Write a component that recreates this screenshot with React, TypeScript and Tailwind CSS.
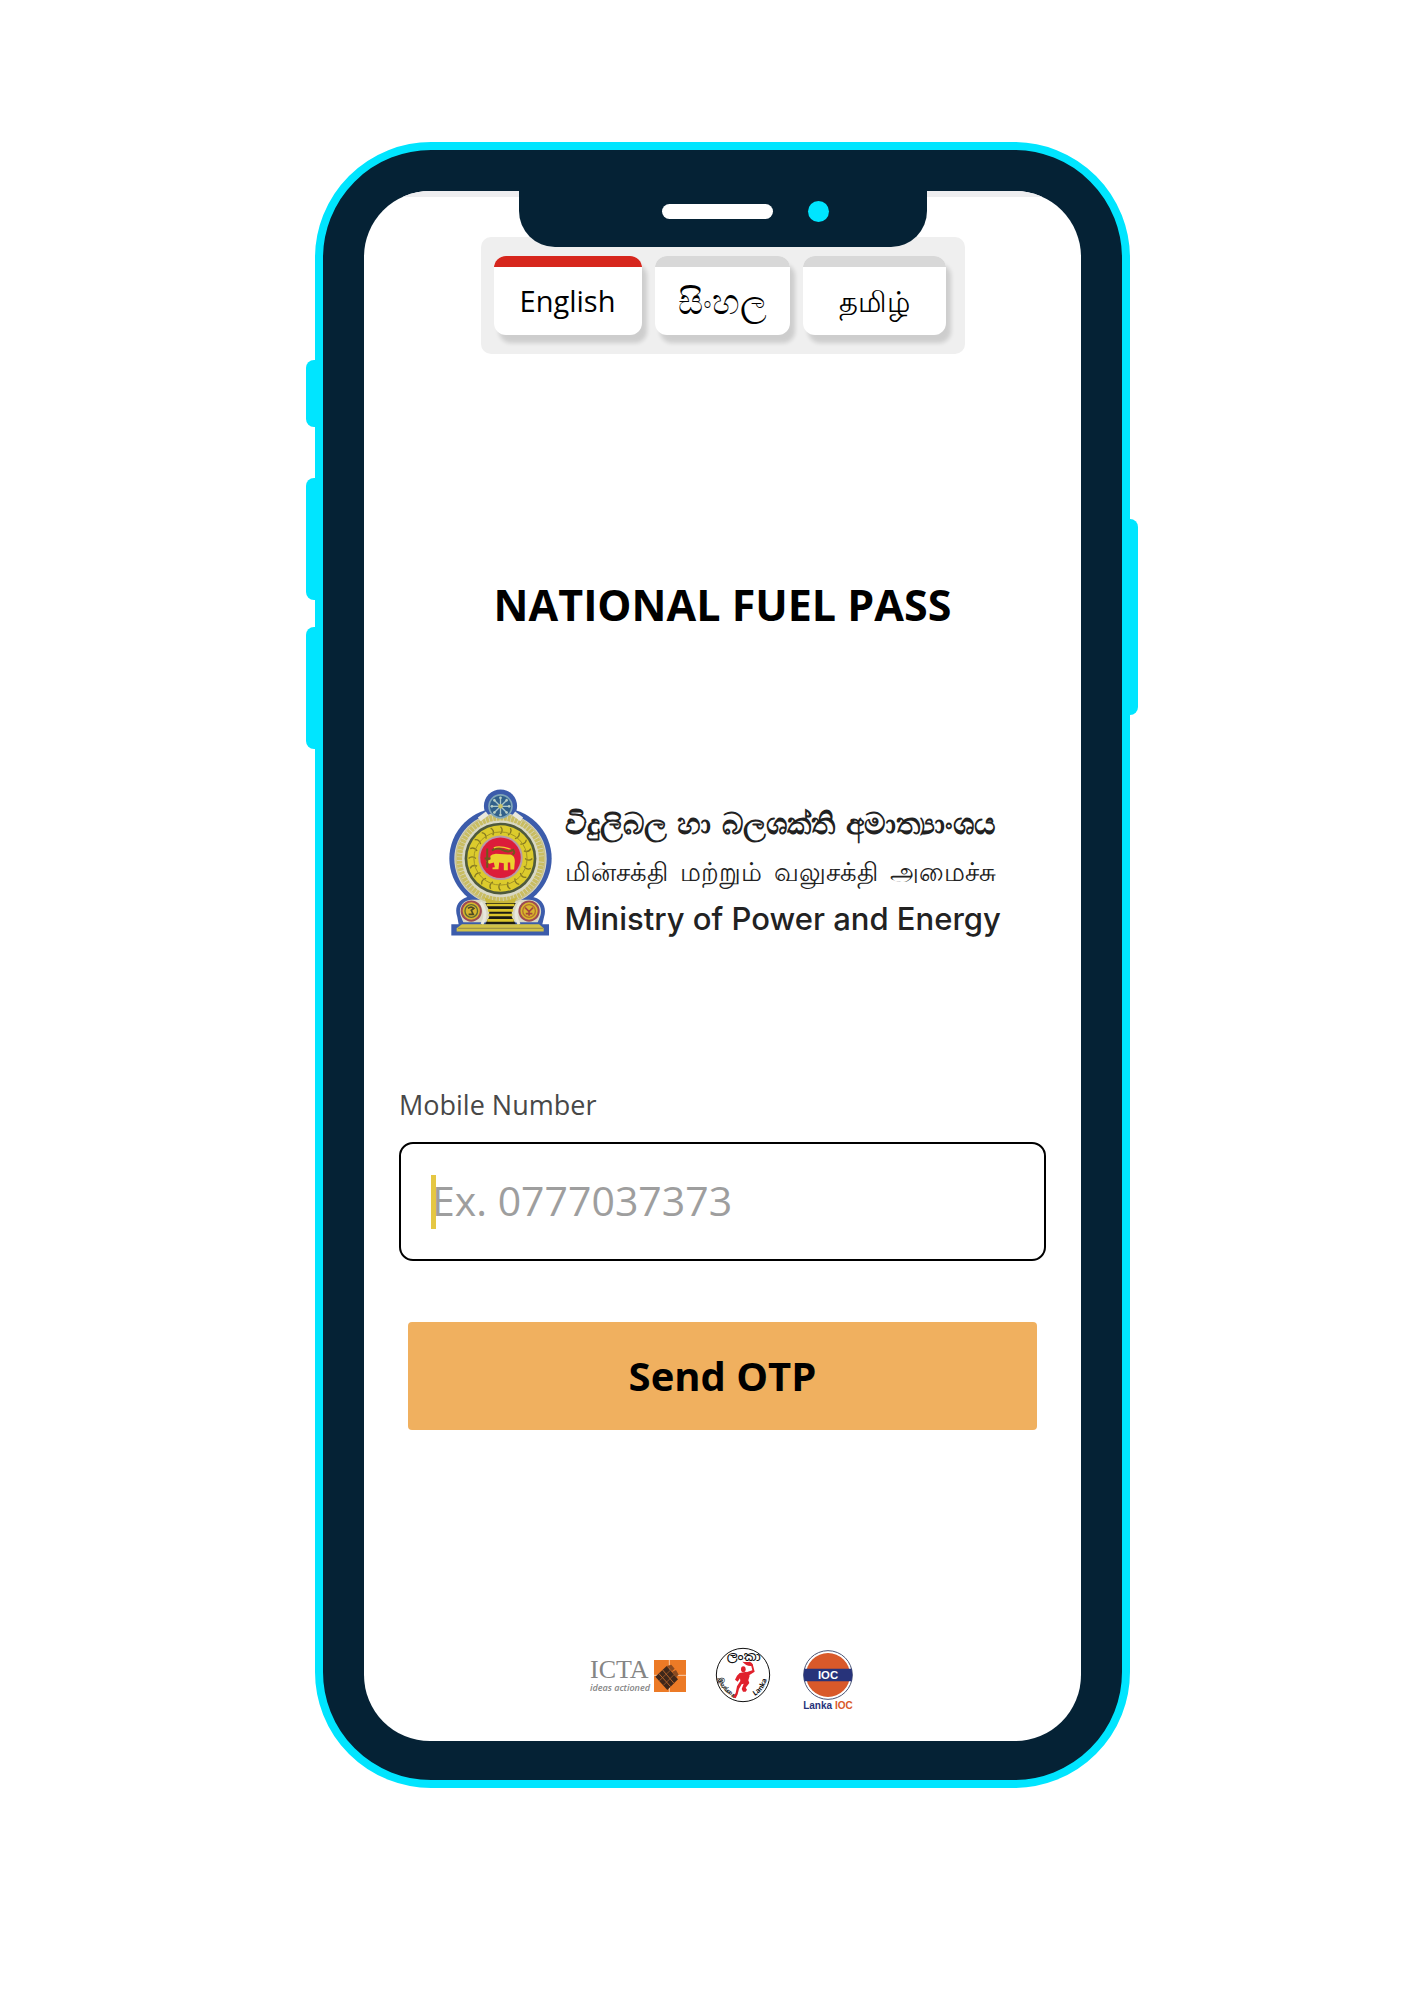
import React, { useState } from "react";

const spokes = [0, 45, 90, 135, 180, 225, 270, 315];
const petals = Array.from({ length: 20 }, (_, i) => i * 18);

function Emblem() {
  return (
    <svg
      viewBox="55 55 310 442"
      className="h-[147px] w-[103px] shrink-0"
      role="img"
      aria-label="Emblem of Sri Lanka"
    >
      <g fill="#3c5cab">
        <circle cx="210" cy="106" r="50" />
        <ellipse cx="210" cy="264" rx="154" ry="152" />
        <path d="M120 378C82 382 70 412 80 440L84 462H62V496H356V462H336L341 440C350 412 338 382 300 378Z" />
      </g>
      <g fill="#d9d8c4">
        <ellipse cx="210" cy="265" rx="139" ry="138" />
        <path d="M128 388C96 386 82 412 90 436L98 456H322L330 436C338 412 324 386 292 388Z" />
      </g>
      <ellipse cx="210" cy="265" rx="124" ry="124" fill="none" stroke="#c9bd62" strokeWidth="17" strokeDasharray="9 2" />
      <ellipse cx="210" cy="265" rx="134" ry="134" fill="none" stroke="#c9c187" strokeWidth="4" />
      <path d="M146 146L170 128M274 146L250 128" stroke="#e9e8dd" strokeWidth="14" />
      <circle cx="210" cy="264" r="108" fill="#4f5a3c" />
      <circle cx="210" cy="264" r="100" fill="#dccb2c" />
      {petals.map((a) => (
        <path
          key={a}
          d="M210 168Q220 178 210 190"
          transform={`rotate(${a} 210 264)`}
          stroke="#857a22"
          strokeWidth="4"
          fill="none"
        />
      ))}
      <circle cx="210" cy="264" r="80" fill="none" stroke="#a39424" strokeWidth="3" />
      <circle cx="210" cy="262" r="67" fill="#b79aa8" />
      <circle cx="210" cy="262" r="61" fill="#dc1c3a" />
      <path
        d="M186 252L196 250L232 252C246 250 254 258 253 274L251 297H240L239 276L232 276V299H220V278L206 276L204 296H186V291L193 290L190 276L176 280L166 272L178 268L180 256Z"
        fill="#ecd22e"
      />
      <path d="M184 240Q200 228 216 238T248 238Q256 248 246 252M170 234V292M162 264H180" stroke="#6f5a1c" strokeWidth="6" fill="none" />
      <path d="M190 232Q206 224 240 236" stroke="#ecd22e" strokeWidth="4" fill="none" />
      <circle cx="210" cy="107" r="37" fill="#7fa6b8" />
      <circle cx="210" cy="107" r="32" fill="#31608a" />
      {spokes.map((a) => (
        <g key={a} transform={`rotate(${a} 210 107)`}>
          <path d="M210 101V82" stroke="#a9c6c9" strokeWidth="4" />
          <circle cx="210" cy="81" r="4" fill="#b9cfc4" />
        </g>
      ))}
      <circle cx="210" cy="107" r="7" fill="#c9c46a" />
      <path d="M160 380Q210 404 260 380L252 398H168Z" fill="#c9b83a" />
      <path d="M164 398H256L244 420V440L256 462H164L176 440V420Z" fill="#1d1c14" />
      <path d="M168 404H252M172 420H248M174 434H246M170 450H250" stroke="#dcc62c" strokeWidth="8" />
      <path d="M150 396C166 420 166 444 154 462M270 396C254 420 254 444 266 462" stroke="#e8e7de" strokeWidth="9" fill="none" />
      <circle cx="122" cy="422" r="32" fill="#9e4a52" />
      <circle cx="122" cy="422" r="26" fill="#d8b52e" />
      <circle cx="122" cy="422" r="19" fill="none" stroke="#5d6a35" strokeWidth="4" />
      <path d="M112 414Q122 406 130 414L122 420L128 432H114" stroke="#4e4a24" strokeWidth="5" fill="none" />
      <circle cx="296" cy="422" r="32" fill="#9e4a52" />
      <circle cx="296" cy="422" r="26" fill="#d8b52e" />
      <circle cx="296" cy="422" r="19" fill="none" stroke="#b5702e" strokeWidth="4" />
      <path d="M284 412L296 424L308 412M296 424V436M286 430H306" stroke="#a5483c" strokeWidth="5" fill="none" />
      <path d="M94 462H326L340 474V484H78V474Z" fill="#d2c247" />
      <path d="M82 474H338" stroke="#958a45" strokeWidth="3" />
    </svg>
  );
}

function IctaMark() {
  return (
    <svg viewBox="0 0 96 96" className="size-8 shrink-0" aria-hidden="true">
      <rect width="96" height="96" fill="#ec7a26" />
      <path d="M0 46H96M46 0V96" stroke="#f8cfae" strokeWidth="3" />
      <path d="M4 50L38 18L72 58L40 90Z" fill="#3f271a" />
      <path d="M38 18L52 14L62 26L54 34ZM54 36L66 30L74 44L66 52Z" fill="#8a4a20" />
      <path d="M14 40L50 80M26 30L60 70" stroke="#b5642c" strokeWidth="3" />
      <path d="M16 62L48 32M28 76L60 44" stroke="#b5642c" strokeWidth="2" />
    </svg>
  );
}

function CeypetcoMark() {
  return (
    <svg viewBox="0 0 168 168" className="size-14 shrink-0" role="img" aria-label="Ceypetco">
      <defs>
        <path id="arc-left" d="M12 84A72 72 0 0 0 66 154" />
        <path id="arc-right" d="M108 152A72 72 0 0 0 156 84" />
      </defs>
      <circle cx="84" cy="84" r="80" fill="#fff" stroke="#111" strokeWidth="3" />
      <g fill="#111" fontWeight="700" textAnchor="middle" fontFamily="'Noto Sans Sinhala','Noto Sans',sans-serif">
        <text x="86" y="42" fontSize="38" fontWeight="500">ලංකා</text>
        <text fontSize="19"><textPath href="#arc-left" startOffset="50%">இலங்கை</textPath></text>
        <text fontSize="21"><textPath href="#arc-right" startOffset="50%">Lanka</textPath></text>
      </g>
      <g fill="#e0212c">
        <ellipse cx="85" cy="67" rx="7" ry="9" />
        <path d="M74 78L94 74L104 86L100 100L103 108L92 122L96 128L92 134L84 134L80 126L86 110L80 112L72 126L68 142L62 154L54 150L62 138L66 118L76 102L75 94L68 104L60 98L66 86Z" />
        <path d="M94 76L112 70L108 54L113 51L119 74L100 86Z" />
        <path d="M82 44Q96 46 104 44Q114 47 113 56Q96 60 82 44Z" />
      </g>
    </svg>
  );
}

function IocMark() {
  return (
    <svg viewBox="0 0 150 150" className="size-[50px]" role="img" aria-label="IOC">
      <circle cx="75" cy="75" r="73" fill="#fff" stroke="#4a5475" strokeWidth="3" />
      <circle cx="75" cy="75" r="66" fill="#d9592a" />
      <path d="M4 56H146Q150 75 146 94H4Q0 75 4 56Z" fill="#27337a" />
      <text x="75" y="86" fontSize="34" fontWeight="700" textAnchor="middle" fill="#fff" fontFamily="'Liberation Sans',sans-serif">IOC</text>
    </svg>
  );
}

const languages = [
  { id: "en", label: "English", size: "w-[148px] text-[29px]" },
  { id: "si", label: "සිංහල", size: "w-[135px] text-[35px] font-medium" },
  { id: "ta", label: "தமிழ்", size: "w-[143px] text-[29px] font-medium" },
];

export default function App() {
  const [language, setLanguage] = useState("en");

  return (
    <main className="flex min-h-screen justify-center bg-white pt-[142px] pb-[211px] pl-[31px] font-['Open_Sans','Noto_Sans',sans-serif] text-black">
      <div className="relative w-full max-w-[815px] self-start rounded-[116px] border-8 border-[#00e5ff] bg-[#052235] px-[41px] pt-[41px] pb-[39px]">
        <span className="absolute top-[210px] -left-[17px] h-[67px] w-[9px] rounded-l-lg bg-[#00e5ff]" />
        <span className="absolute top-[328px] -left-[17px] h-[122px] w-[9px] rounded-l-lg bg-[#00e5ff]" />
        <span className="absolute top-[477px] -left-[17px] h-[122px] w-[9px] rounded-l-lg bg-[#00e5ff]" />
        <span className="absolute top-[369px] -right-[16px] h-[196px] w-[9px] rounded-r-lg bg-[#00e5ff]" />

        <div className="relative overflow-hidden rounded-[66px] bg-white">
          <div className="h-1.5 bg-[#eeeef0]" />
          <div className="absolute top-0 left-1/2 flex h-14 w-[408px] -translate-x-1/2 items-start justify-center rounded-b-[36px] bg-[#052235] pt-[10px] pl-[45px]">
            <div className="flex items-center gap-[35px]">
              <span className="h-[15px] w-[111px] rounded-full bg-white" />
              <span className="size-[21px] rounded-full bg-[#00e5ff]" />
            </div>
          </div>

          <div className="flex flex-col items-center px-[35px] pt-10 pb-[29px]">
            <div className="flex gap-[13px] rounded-[10px] bg-[#efefef] pt-[19px] pr-[19px] pb-[19px] pl-[13px]">
              {languages.map((l) => (
                <button
                  key={l.id}
                  type="button"
                  aria-pressed={language === l.id}
                  onClick={() => setLanguage(l.id)}
                  className={`${l.size} flex h-[79px] flex-col overflow-hidden rounded-xl bg-white shadow-[5px_8px_4px_rgba(0,0,0,0.14)]`}
                >
                  <span className={`h-[11px] w-full shrink-0 ${language === l.id ? "bg-[#d6261d]" : "bg-[#d8d8d8]"}`} />
                  <span className="flex w-full flex-1 items-center justify-center leading-10">{l.label}</span>
                </button>
              ))}
            </div>

            <h1 className="mt-[221px] text-[43px] leading-[60px] font-bold">NATIONAL FUEL PASS</h1>

            <div className="mt-[154px] flex items-start gap-[13px]">
              <Emblem />
              <div className="flex w-[432px] flex-col pt-[10px] whitespace-nowrap text-[#222]">
                <span className="text-[30px] leading-[48px] font-bold [text-align-last:justify]">විදුලිබල හා බලශක්ති අමාත්‍යාංශය</span>
                <span className="text-[26px] leading-[48px] font-medium [text-align-last:justify]">மின்சக்தி மற்றும் வலுசக்தி அமைச்சு</span>
                <span className="font-['Inter',sans-serif] text-[31px] leading-[48px] font-medium">Ministry of Power and Energy</span>
              </div>
            </div>

            <form className="mt-[142px] flex w-full flex-col" onSubmit={(e) => e.preventDefault()}>
              <label htmlFor="mobile" className="text-[27px] leading-10 text-[#484848]">
                Mobile Number
              </label>
              <div className="relative mt-[17px]">
                <input
                  id="mobile"
                  type="tel"
                  placeholder="Ex. 0777037373"
                  className="block h-[119px] w-full rounded-[14px] border-2 border-black bg-white pb-[3px] pl-[31px] text-[41px] outline-none placeholder:text-[#9e9e9e]"
                />
                <span className="absolute top-[33px] left-8 h-[54px] w-[5px] bg-[#e2c12f]/90" />
              </div>
              <button type="submit" className="mx-[9px] mt-[61px] h-[108px] rounded bg-[#f0b05f] text-[40px] font-bold">
                Send OTP
              </button>
            </form>

            <footer className="mt-[217px] flex items-start pr-[2px]">
              <div className="mt-[10px] flex items-center gap-1">
                <div className="flex flex-col text-[#858585]">
                  <span className="font-['Liberation_Serif',serif] text-[26px] leading-[25px]">ICTA</span>
                  <span className="text-[9px] leading-3 font-semibold italic">ideas actioned</span>
                </div>
                <IctaMark />
              </div>
              <div className="mr-8 ml-[29px]">
                <CeypetcoMark />
              </div>
              <div className="mt-[3px] flex flex-col items-center">
                <IocMark />
                <span className="font-['Liberation_Sans',sans-serif] text-[10px] leading-3 font-bold text-[#27337a]">
                  Lanka <span className="text-[#d9592a]">IOC</span>
                </span>
              </div>
            </footer>
          </div>
        </div>
      </div>
    </main>
  );
}
